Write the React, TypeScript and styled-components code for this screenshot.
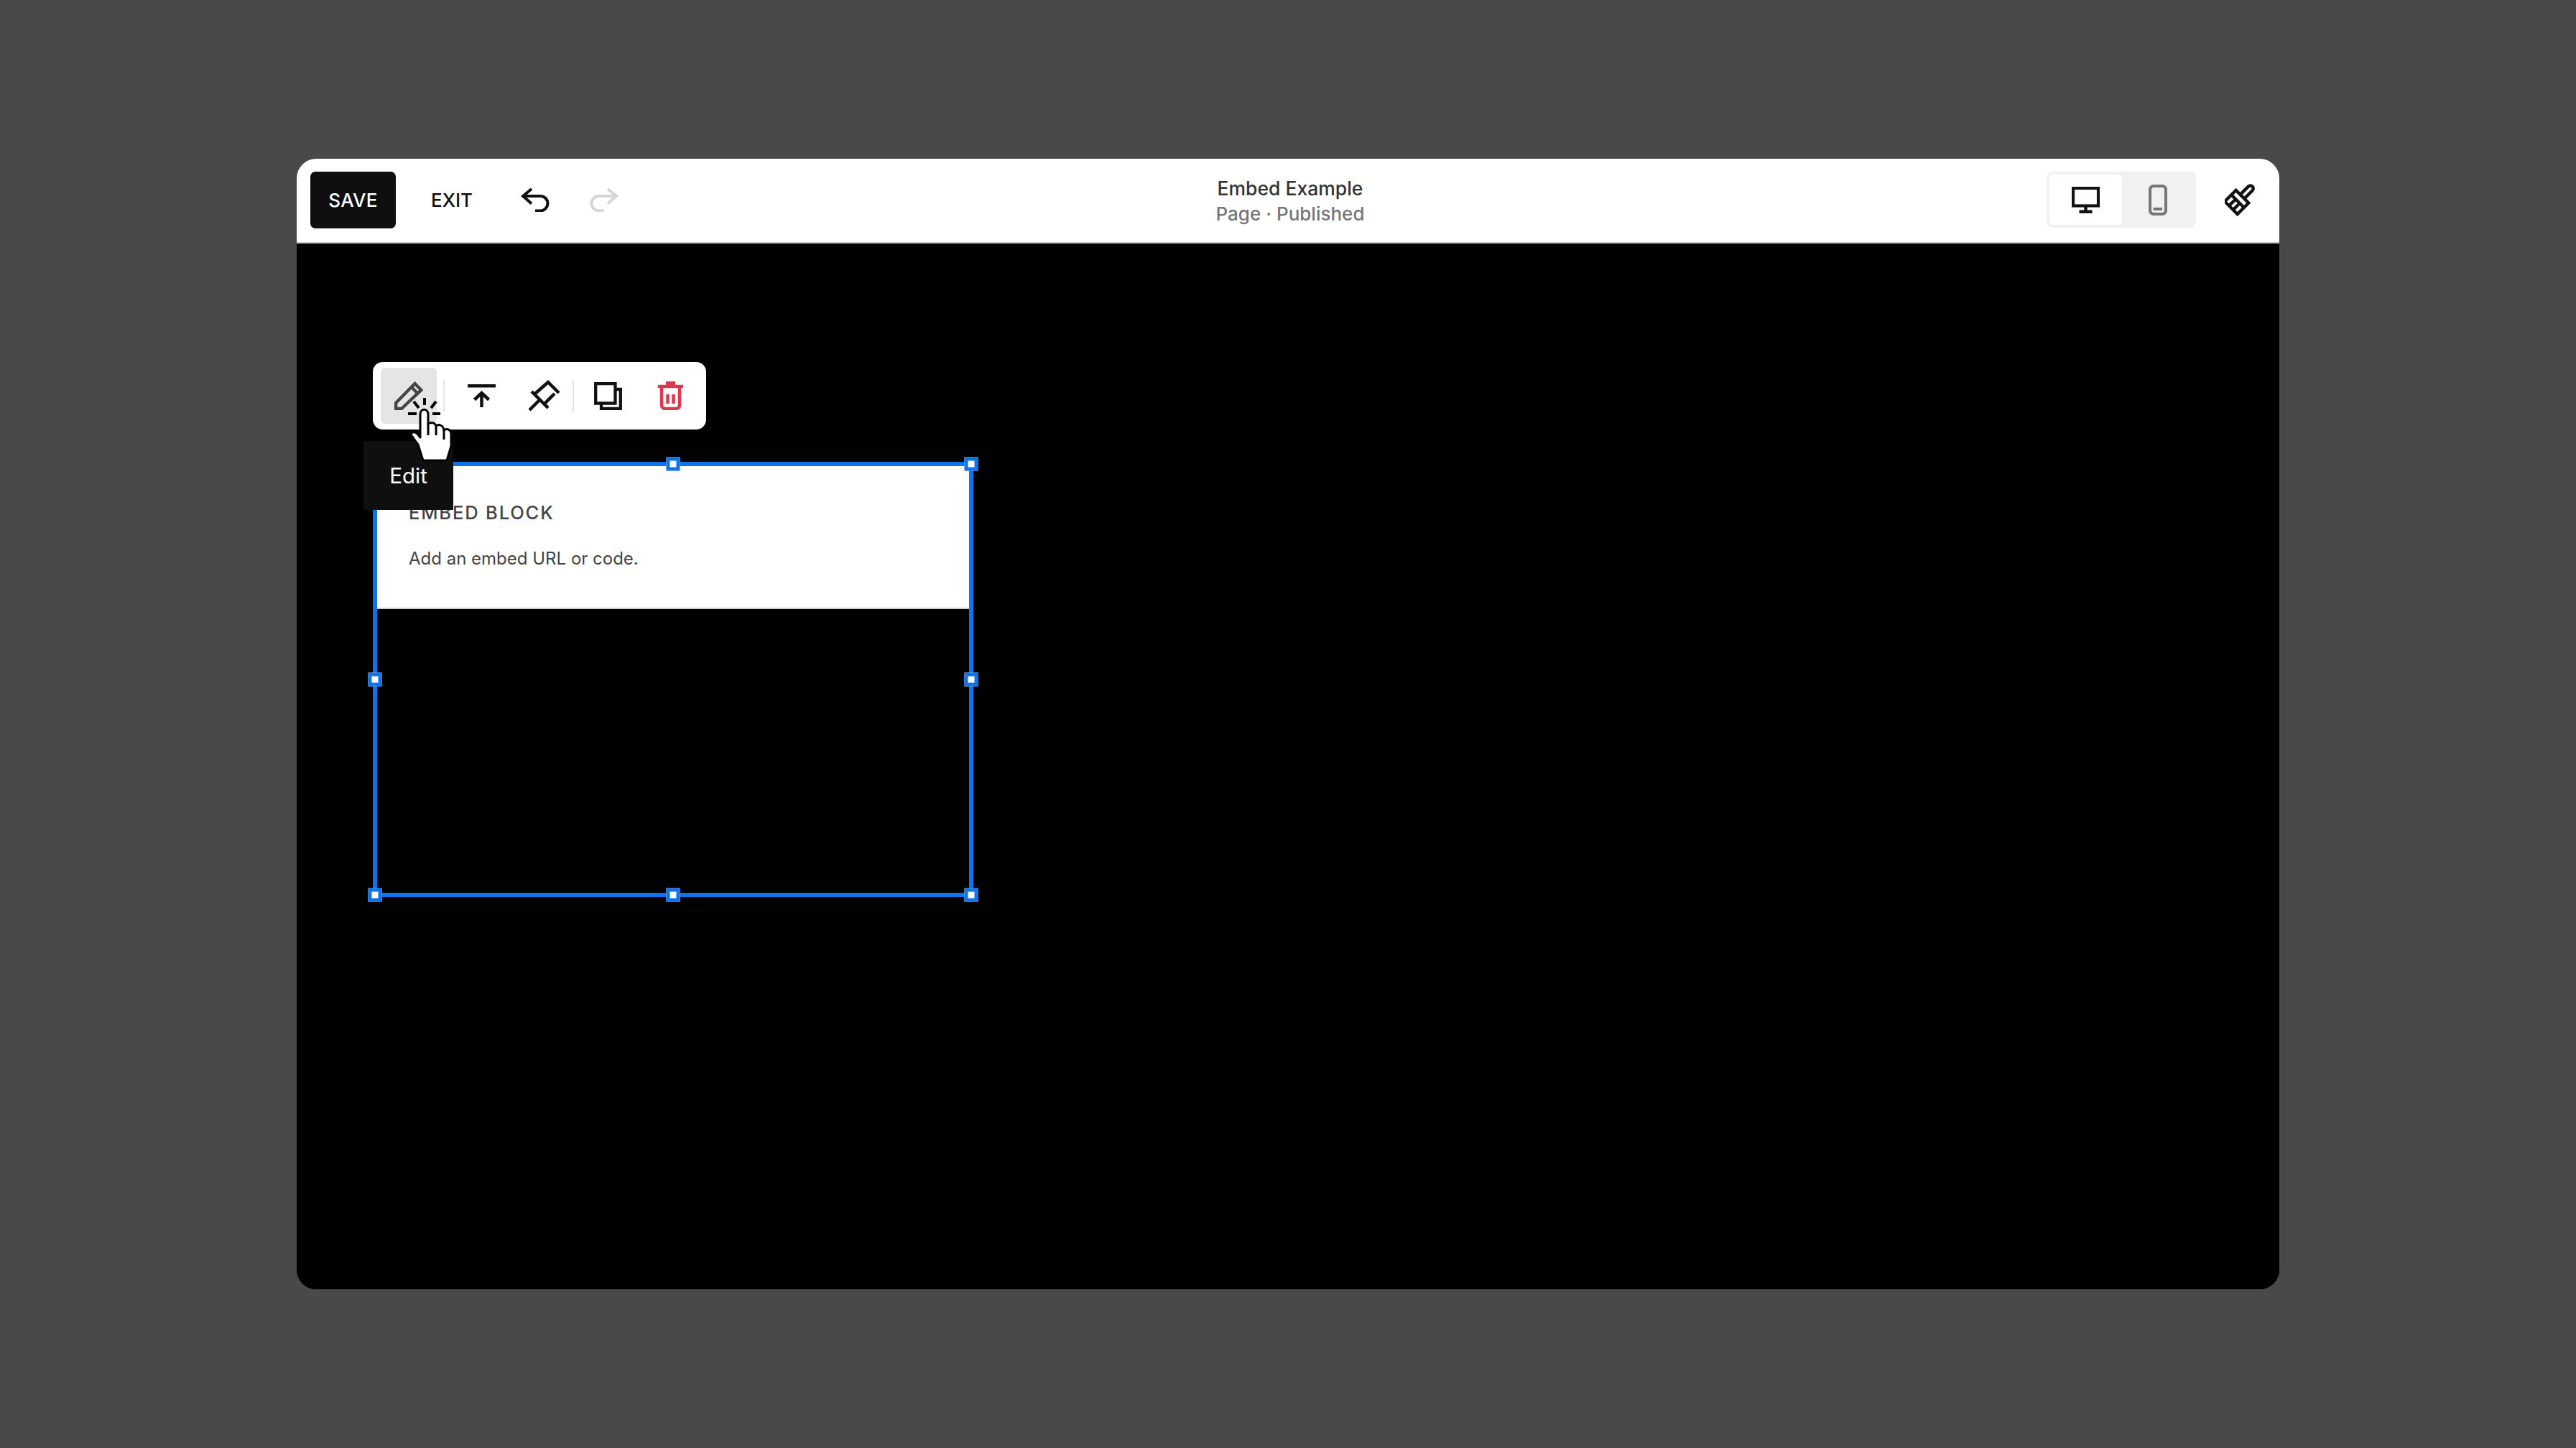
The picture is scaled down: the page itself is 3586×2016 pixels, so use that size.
import styled, { createGlobalStyle } from 'styled-components';

const GlobalStyle = createGlobalStyle`
  html, body {
    margin: 0;
    background: #494949;
  }
  * {
    box-sizing: border-box;
  }
`;

const Page = styled.div`
  width: 3586px;
  height: 2016px;
  padding: 221px 0 0 413px;
  font-family: Inter, 'Liberation Sans', sans-serif;
`;

const Window = styled.div`
  width: 2760px;
  height: 1574px;
  border-radius: 27px;
  overflow: hidden;
  display: flex;
  flex-direction: column;
  background: #000;
`;

const Header = styled.header`
  height: 118px;
  flex: none;
  display: grid;
  grid-template-columns: 1fr auto 1fr;
  align-items: center;
  padding: 0 13px 2px 19px;
  background: #fff;
  border-bottom: 2px solid #c9c9c9;
`;

const HeaderLeft = styled.div`
  display: flex;
  align-items: center;
`;

const SaveButton = styled.button`
  width: 119px;
  height: 79px;
  border: 0;
  border-radius: 7px;
  background: #0f0f0f;
  color: #fff;
  font: 500 26px Inter, sans-serif;
  letter-spacing: 0.3px;
`;

const ExitButton = styled.button`
  margin-left: 49px;
  padding: 0;
  width: 56px;
  border: 0;
  background: none;
  color: #111;
  font: 500 26px Inter, sans-serif;
`;

const HistoryIcon = styled.svg<{ $gap: number }>`
  margin-left: ${(p) => p.$gap}px;
  width: 40px;
  height: 33px;
  fill: none;
  stroke-width: 4;
`;

const TitleBlock = styled.div`
  padding-top: 3px;
  text-align: center;
  line-height: 35px;
  font-weight: 500;
`;

const PageTitle = styled.div`
  font-size: 26.5px;
  color: #333;
`;

const PageStatus = styled.div`
  font-size: 26px;
  color: #777;
`;

const HeaderRight = styled.div`
  display: flex;
  align-items: center;
  justify-content: flex-end;
`;

const ViewToggle = styled.div`
  width: 208px;
  height: 78px;
  padding: 4px;
  display: flex;
  border-radius: 8px;
  background: #f1f1f1;
`;

const ViewOption = styled.div<{ $active?: boolean }>`
  width: ${(p) => (p.$active ? 101 : 99)}px;
  height: 70px;
  display: flex;
  align-items: center;
  justify-content: center;
  border-radius: 5px;
  background: ${(p) => (p.$active ? '#fff' : 'transparent')};
`;

const BrushButton = styled.div`
  margin: 0 9px 0 31px;
  width: 63px;
  display: flex;
  justify-content: center;
`;

const Canvas = styled.main`
  flex: 1;
  padding: 304px 0 0 106px;
  background: #000;
`;

const Selection = styled.div`
  position: relative;
  width: 836px;
  height: 606px;
  border: 6px solid #0f73ee;
`;

const EmbedBlock = styled.div`
  height: 199px;
  padding: 50px 44px 0;
  background: #fff;
  border-bottom: 2px solid #cfcfcf;
`;

const EmbedTitle = styled.div`
  font-size: 25.5px;
  line-height: 30px;
  font-weight: 500;
  letter-spacing: 1.85px;
  color: #444;
`;

const EmbedHint = styled.div`
  margin-top: 31px;
  font-size: 24px;
  line-height: 36px;
  color: #444;
`;

const HandleLayer = styled.div`
  position: absolute;
  inset: -3px;
  pointer-events: none;
`;

const Handle = styled.span<{ $x: number; $y: number }>`
  position: absolute;
  left: ${(p) => p.$x}%;
  top: ${(p) => p.$y}%;
  width: 19px;
  height: 19px;
  transform: translate(-50%, -50%);
  background: #fff;
  border: 5px solid #0f73ee;
`;

const Toolbar = styled.div`
  position: absolute;
  left: -6px;
  top: -145px;
  width: 464px;
  height: 94px;
  padding: 8px 11px;
  display: flex;
  align-items: center;
  border-radius: 14px;
  background: #fff;
`;

const ToolButton = styled.div<{ $active?: boolean; $gap?: number }>`
  width: 78px;
  height: 78px;
  flex: none;
  margin-left: ${(p) => p.$gap ?? 0}px;
  display: flex;
  align-items: center;
  justify-content: center;
  border-radius: 6px;
  background: ${(p) => (p.$active ? '#e5e5e5' : 'transparent')};
`;

const ToolSeparator = styled.div<{ $before: number; $after: number }>`
  width: 2px;
  height: 44px;
  flex: none;
  margin: 0 ${(p) => p.$after}px 0 ${(p) => p.$before}px;
  background: #e5e5e5;
`;

const Tooltip = styled.div`
  position: absolute;
  left: -19px;
  top: -35px;
  width: 125px;
  height: 96px;
  display: flex;
  align-items: center;
  justify-content: center;
  background: #0f0f0f;
  color: #fff;
  font-size: 29.5px;
`;

const Cursor = styled.svg`
  position: absolute;
  left: 35px;
  top: -103px;
  width: 80px;
  height: 105px;
`;

const handles = [
  [0, 0],
  [50, 0],
  [100, 0],
  [0, 50],
  [100, 50],
  [0, 100],
  [50, 100],
  [100, 100],
];

const UndoIcon = () => (
  <HistoryIcon $gap={69} viewBox="0 0 40 33" stroke="#111">
    <path d="M15 1 3 11l12 10.5M3 11h24c6 0 10.500 4.500 10.500 10S33 31.500 27 31.500h-7" />
  </HistoryIcon>
);

const RedoIcon = () => (
  <HistoryIcon $gap={56} viewBox="0 0 40 33" stroke="#d6d6d6">
    <path d="M25 1l12 10-12 10.500M37 11H13C7 11 2.500 15.500 2.500 21S7 31.500 13 31.500h7" />
  </HistoryIcon>
);

const DesktopIcon = () => (
  <svg width="39" height="37" viewBox="0 0 39 37" fill="none">
    <rect x="2" y="2" width="35" height="24.500" stroke="#111" strokeWidth="4.200" />
    <path d="M17.300 28h4.400v6h-4.400zM10.500 32.500h18V37h-18z" fill="#111" />
  </svg>
);

const PhoneIcon = () => (
  <svg width="26" height="43" viewBox="0 0 26 43" fill="none">
    <rect x="2" y="2" width="22" height="39" rx="5" stroke="#777" strokeWidth="4.200" />
    <path d="M6.500 32H19v4H6.500z" fill="#777" />
  </svg>
);

const BrushIcon = () => (
  <svg width="46" height="46" viewBox="0 0 46 46" fill="none" stroke="#111" strokeWidth="4.400">
    <g transform="rotate(45 23 23)">
      <path d="M8.500 19h25v22h-25z" />
      <path d="M17 19V3a4 4 0 0 1 8 0V19" />
      <path d="M8.500 28h25M17 41V28M25 41V28" />
    </g>
  </svg>
);

const PencilIcon = () => (
  <svg width="40" height="40" viewBox="0 0 40 40" fill="none" stroke="#444" strokeWidth="4.300">
    <path d="M2.100 38V30L28.500 3 37.300 12 10 38zM23.500 7.500l9 9.500" />
  </svg>
);

const MoveTopIcon = () => (
  <svg width="39" height="32" viewBox="0 0 39 32" fill="none" stroke="#111" strokeWidth="4.500">
    <path d="M0 2.300h39M19.500 32V12M9.500 21.500l10-9.500 10 9.500" />
  </svg>
);

const PinIcon = () => (
  <svg width="70" height="60" viewBox="-2 0 70 60" fill="none" stroke="#111" strokeWidth="4.500">
    <path d="M36.500 9.500 53 26M15 24l23 23M20 27 37 12M33 41l14-14M12 50l13-13" />
  </svg>
);

const DuplicateIcon = () => (
  <svg width="39" height="39" viewBox="0 0 39 39" fill="none" stroke="#111" strokeWidth="4.300">
    <path d="M2.200 2.200h27.300v27.300H2.200zM29.500 10h7.300v26.800H10v-7.300" />
  </svg>
);

const TrashIcon = () => (
  <svg width="35" height="40" viewBox="0 0 35 40" fill="none" stroke="#d93a4c" strokeWidth="4.500">
    <path d="M0 7h35" />
    <path d="M5 7v26c0 3 2 5 5 5h15c3 0 5-2 5-5V7" />
    <path d="M13.500 18v13M21.500 18v13" />
    <path d="M11 5V0h13v5z" fill="#d93a4c" stroke="none" />
  </svg>
);

const HandCursor = () => (
  <Cursor viewBox="0 0 80 105">
    <g stroke="#000" strokeWidth="4" fill="none">
      <path d="M31 8v10M16 13l7 9M47 13l-7 9M8 30h12M42 30h11" />
    </g>
    <path
      d="M12 59C13 55 18 55 21 58L25 63V31C25 22 36 22 36 31V44C41 41 46 43 47 47C51 44 57 46 58 53C62 50 68 52 68 58V75L62 95H29L22 73Z"
      fill="#fff"
      stroke="#000"
      strokeWidth="3"
      strokeLinejoin="round"
    />
    <path d="M36 44v16M47 47v13M58 53v13" stroke="#000" strokeWidth="3" fill="none" />
  </Cursor>
);

export default function App() {
  return (
    <>
      <GlobalStyle />
      <Page>
        <Window>
          <Header>
            <HeaderLeft>
              <SaveButton>SAVE</SaveButton>
              <ExitButton>EXIT</ExitButton>
              <UndoIcon />
              <RedoIcon />
            </HeaderLeft>
            <TitleBlock>
              <PageTitle>Embed Example</PageTitle>
              <PageStatus>Page · Published</PageStatus>
            </TitleBlock>
            <HeaderRight>
              <ViewToggle>
                <ViewOption $active>
                  <DesktopIcon />
                </ViewOption>
                <ViewOption>
                  <PhoneIcon />
                </ViewOption>
              </ViewToggle>
              <BrushButton>
                <BrushIcon />
              </BrushButton>
            </HeaderRight>
          </Header>
          <Canvas>
            <Selection>
              <EmbedBlock>
                <EmbedTitle>EMBED BLOCK</EmbedTitle>
                <EmbedHint>Add an embed URL or code.</EmbedHint>
              </EmbedBlock>
              <HandleLayer>
                {handles.map(([x, y]) => (
                  <Handle key={`${x}-${y}`} $x={x} $y={y} />
                ))}
              </HandleLayer>
              <Toolbar>
                <ToolButton $active>
                  <PencilIcon />
                </ToolButton>
                <ToolSeparator $before={9} $after={12} />
                <ToolButton>
                  <MoveTopIcon />
                </ToolButton>
                <ToolButton $gap={10}>
                  <PinIcon />
                </ToolButton>
                <ToolSeparator $before={0} $after={8} />
                <ToolButton>
                  <DuplicateIcon />
                </ToolButton>
                <ToolButton $gap={9}>
                  <TrashIcon />
                </ToolButton>
              </Toolbar>
              <Tooltip>Edit</Tooltip>
              <HandCursor />
            </Selection>
          </Canvas>
        </Window>
      </Page>
    </>
  );
}
